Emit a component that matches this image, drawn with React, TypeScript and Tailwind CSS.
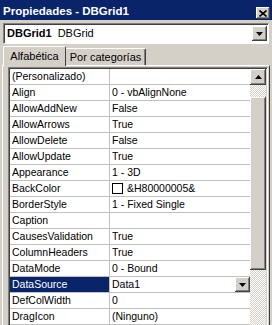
import React from 'react';

const rows: [string, string][] = [
  ['(Personalizado)', ''],
  ['Align', '0 - vbAlignNone'],
  ['AllowAddNew', 'False'],
  ['AllowArrows', 'True'],
  ['AllowDelete', 'False'],
  ['AllowUpdate', 'True'],
  ['Appearance', '1 - 3D'],
  ['BackColor', '&H80000005&'],
  ['BorderStyle', '1 - Fixed Single'],
  ['Caption', ''],
  ['CausesValidation', 'True'],
  ['ColumnHeaders', 'True'],
  ['DataMode', '0 - Bound'],
  ['DataSource', 'Data1'],
  ['DefColWidth', '0'],
  ['DragIcon', '(Ninguno)'],
];

const raised =
  'bg-[#d4d0c8] shadow-[inset_-1px_-1px_#404040,inset_1px_1px_#ffffff,inset_-2px_-2px_#808080,inset_2px_2px_#d4d0c8]';

function DownArrow() {
  return (
    <svg width="7" height="4" viewBox="0 0 7 4">
      <path d="M0 0h7L3.5 4z" fill="#000" />
    </svg>
  );
}

export default function App() {
  return (
    <div className="w-[272px] h-[325px] bg-[#d4d0c8] overflow-hidden font-['Liberation_Sans',Arial,sans-serif] text-[10.5px] text-black leading-none">
      {/* title bar */}
      <div className="h-[20px] bg-[#0a246a] flex items-end justify-between pl-[3px] pr-[2px] pb-[1px]">
        <span className="text-white font-bold text-[11.5px] pb-[2px]">Propiedades - DBGrid1</span>
        <div className={`w-[14px] h-[12px] flex items-center justify-center ${raised}`}>
          <svg width="8" height="7" viewBox="0 0 8 7">
            <path d="M0.5 0.5L7.5 6.5M7.5 0.5L0.5 6.5" stroke="#000" strokeWidth="1.6" />
          </svg>
        </div>
      </div>

      {/* object combo */}
      <div className="mt-[3px] ml-[3px] mr-[3px] h-[21px] bg-white border-t border-l border-[#808080] border-r border-b border-r-white border-b-white shadow-[inset_1px_1px_#404040] flex items-center">
        <span className="pl-[3px] font-bold text-[11px]">DBGrid1</span>
        <span className="pl-[6px] text-[11px]">DBGrid</span>
        <div className="flex-1" />
        <div className={`w-[15px] h-[15px] mr-[1px] flex items-center justify-center ${raised}`}>
          <DownArrow />
        </div>
      </div>

      {/* tabs */}
      <div className="mt-[2px] h-[20px] flex items-end pl-[3px] relative z-10">
        <div className="h-[20px] w-[63px] bg-[#d4d0c8] border-t border-l border-white border-r border-r-[#404040] rounded-t-[2px] flex items-center justify-center text-[11px] pb-[1px]">
          Alfabética
        </div>
        <div className="h-[17px] w-[80px] bg-[#d4d0c8] border-t border-white border-r border-r-[#404040] shadow-[inset_-1px_0_#808080] rounded-tr-[2px] flex items-center justify-center text-[11px] mb-[1px]">
          Por categorías
        </div>
      </div>

      {/* panel */}
      <div className="ml-[2px] mr-[2px] h-[260px] border-t border-l border-white border-r border-r-[#404040] -mt-[1px] pt-[1px] pl-[5px] pr-[1px]">
        <div className="h-[270px] border-t border-l border-[#808080] border-r border-r-white shadow-[inset_1px_1px_#404040] pt-[1px] pl-[1px] flex">
          <div className="w-[240px] bg-white">
            {rows.map(([name, value]) => {
              const sel = name === 'DataSource';
              return (
                <div key={name} className="h-[16px] flex border-b border-[#c0c0c0]">
                  <div
                    className={`w-[100px] border-r border-[#c0c0c0] pl-[2px] flex items-center ${
                      sel ? 'bg-[#0a246a] text-white' : ''
                    }`}
                  >
                    {name}
                  </div>
                  <div className="flex-1 pl-[2px] flex items-center">
                    {name === 'BackColor' && (
                      <span className="w-[11px] h-[11px] border border-black bg-white mr-[4px]" />
                    )}
                    <span className="flex-1">{value}</span>
                    {sel && (
                      <div className={`w-[15px] h-[15px] flex items-center justify-center ${raised}`}>
                        <DownArrow />
                      </div>
                    )}
                  </div>
                </div>
              );
            })}
          </div>
          {/* scrollbar */}
          <div className="w-[16px] flex flex-col bg-[repeating-conic-gradient(#ffffff_0%_25%,#d4d0c8_0%_50%)] bg-[length:2px_2px]">
            <div className={`h-[16px] flex items-center justify-center ${raised}`}>
              <svg width="7" height="4" viewBox="0 0 7 4">
                <path d="M0 4h7L3.5 0z" fill="#000" />
              </svg>
            </div>
            <div className="h-[12px]" />
            <div className={`h-[173px] ${raised}`} />
          </div>
        </div>
      </div>
    </div>
  );
}
